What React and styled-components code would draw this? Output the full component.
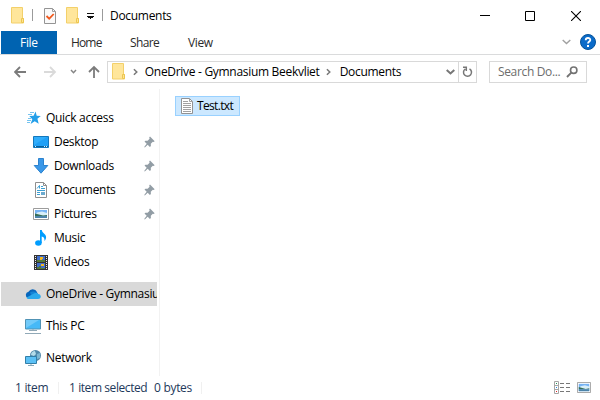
import React from "react";
import styled, { createGlobalStyle } from "styled-components";

const GlobalStyle = createGlobalStyle`
  * { box-sizing: border-box; }
  html, body { margin: 0; background: #fff; overflow: hidden; }
  svg { display: block; flex: none; }
`;

const Window = styled.div`
  width: 600px;
  height: 400px;
  display: flex;
  flex-direction: column;
  background: #fff;
  color: #000;
  font: 12px/16px "Open Sans", "Noto Sans", sans-serif;
  overflow: hidden;
`;

const Label = styled.span`
  white-space: pre;
  letter-spacing: ${(p) => p.$track ?? -0.3}px;
`;

const TitleBar = styled.header`
  height: 31px;
  flex: none;
  display: flex;
  align-items: center;
  padding-left: 11px;
`;

const QuickTools = styled.div`
  display: flex;
  align-items: center;
  flex: 1;
`;

const ToolDivider = styled.i`
  width: 1px;
  height: 12px;
  margin: 0 ${(p) => p.$after}px 2px ${(p) => p.$before}px;
  background: #9b9b9b;
`;

const ToolIcon = styled.span`
  margin-right: ${(p) => p.$gap || 0}px;
`;

const WindowButtons = styled.div`
  display: flex;
`;

const WindowButton = styled.button`
  width: ${(p) => p.$width}px;
  height: 31px;
  padding: 0;
  border: 0;
  background: none;
  display: grid;
  place-items: center;
`;

const Ribbon = styled.nav`
  height: 24px;
  flex: none;
  display: flex;
  padding-left: 1px;
  border-bottom: 1px solid #dadbdc;
`;

const FileTab = styled.div`
  width: 56px;
  padding: 4px 0 0 19px;
  background: #0063b1;
  color: #fff;
`;

const Tab = styled.div`
  width: ${(p) => p.$width}px;
  padding: 4px 0 0 14px;
  color: #2b2b2b;
`;

const RibbonEnd = styled.div`
  margin-left: auto;
  display: flex;
  align-items: center;
  gap: 9px;
  padding: 0 4px 1px 0;
`;

const NavBar = styled.div`
  height: 34px;
  flex: none;
  display: flex;
  align-items: center;
  padding: 0 13px 0 14px;
`;

const NavIcons = styled.div`
  width: 93px;
  display: flex;
  align-items: center;
`;

const AddressBox = styled.div`
  width: 370px;
  height: 22px;
  display: flex;
  align-items: center;
  border: 1px solid #d9d9d9;
  padding-left: 4px;
`;

const AddressFolder = styled.span`
  width: 21px;
  padding-bottom: 1px;
`;

const Crumb = styled.span`
  width: ${(p) => p.$width}px;
`;

const CrumbArrow = styled.span`
  width: ${(p) => p.$width}px;
`;

const Refresh = styled.div`
  width: 18px;
  height: 20px;
  margin-left: 3px;
  border-left: 1px solid #d9d9d9;
  display: grid;
  place-items: center;
`;

const SearchBox = styled.div`
  width: 98px;
  height: 22px;
  margin-left: 12px;
  padding: 0 8px;
  border: 1px solid #d9d9d9;
  color: #6d6d6d;
  display: flex;
  align-items: center;
  justify-content: space-between;
`;

const Body = styled.main`
  height: 287px;
  flex: none;
  display: flex;
`;

const Sidebar = styled.aside`
  width: 160px;
  padding: 17px 2px 0 1px;
  border-right: 1px solid #f2f2f2;
`;

const SideRow = styled.div`
  height: 24px;
  width: 156px;
  margin-top: ${(p) => p.$top || 0}px;
  padding-left: ${(p) => (p.$child ? 32 : 24)}px;
  display: flex;
  align-items: center;
  background: ${(p) => (p.$selected ? "#d9d9d9" : "transparent")};
  overflow: hidden;
`;

const SideIcon = styled.span`
  width: 21px;
  flex: none;
`;

const PinSlot = styled.span`
  margin-left: auto;
  padding-right: 2px;
`;

const Files = styled.section`
  flex: 1;
  padding: 7px 0 0 15px;
`;

const FileItem = styled.div`
  width: 65px;
  height: 20px;
  display: flex;
  align-items: center;
  gap: 4px;
  padding-left: 5px;
  background: #cce8ff;
  border: 1px solid #99d1ff;
`;

const StatusBar = styled.footer`
  flex: 1;
  display: flex;
  align-items: center;
  padding: 0 9px 1px 15px;
  color: #1e395b;
`;

const StatusText = styled.span`
  width: ${(p) => p.$width}px;
`;

const StatusDivider = styled.i`
  width: 1px;
  height: 12px;
  margin-right: ${(p) => p.$after || 0}px;
  background: #f0f0f0;
`;

const ViewModes = styled.div`
  margin-left: auto;
  display: flex;
  align-items: center;
  gap: 7px;
`;

const Folder = () => (
  <svg width="14" height="17" viewBox="0 0 14 17">
    <path d="M.5.5h11v11h1v4.5H.5z" fill="#ffe69b" stroke="#f3d06a" />
    <path d="M10.5 15.5v-4h2v4z" fill="#ffe391" stroke="#ecc650" />
  </svg>
);

const CheckedPage = () => (
  <svg width="12" height="16" viewBox="0 0 12 16">
    <path d="M.5.5h8l3 3v12H.5z" fill="#fafafa" stroke="#949494" />
    <path d="M8.5.5v3h3" fill="none" stroke="#a0a0a0" />
    <path d="M2.5 8l2.7 2.7L9.7 6" fill="none" stroke="#f0591e" strokeWidth="1.8" />
  </svg>
);

const Customize = () => (
  <svg width="7" height="6" viewBox="0 0 7 6" shapeRendering="crispEdges">
    <path d="M0 0h7v1H0zM0 3h7v1H6v1H4v1H3V5H1V4H0z" fill="#111" />
  </svg>
);

const Minimize = () => (
  <svg width="10" height="10" viewBox="0 0 10 10"><path d="M0 4.5h10" stroke="#000" /></svg>
);
const Maximize = () => (
  <svg width="10" height="10" viewBox="0 0 10 10"><path d="M.5.5h9v9h-9z" fill="none" stroke="#000" /></svg>
);
const Close = () => (
  <svg width="10" height="10" viewBox="0 0 10 10"><path d="M0 0l10 10M10 0L0 10" stroke="#000" strokeWidth="1.1" /></svg>
);

const Chevron = ({ color = "#777", w = 8, weight = 1.8 }) => (
  <svg width={w} height="6" viewBox={`0 0 ${w} 6`}>
    <path d={`M.7 1L${w / 2} ${w / 2}L${w - 0.7} 1`} fill="none" stroke={color} strokeWidth={weight} />
  </svg>
);

const RightChevron = () => (
  <svg width="5" height="8" viewBox="0 0 5 8">
    <path d="M.9 1.2L3.8 4L.9 6.8" fill="none" stroke="#777" strokeWidth="1.5" />
  </svg>
);

const Help = () => (
  <svg width="16" height="16" viewBox="0 0 16 16">
    <circle cx="8" cy="8" r="7.5" fill="#0b6bc9" stroke="#075399" />
    <path d="M5.7 6.2C5.7 3.3 10.3 3.3 10.3 6C10.3 7.6 8 7.6 8 9.6" fill="none" stroke="#fff" strokeWidth="1.8" />
    <path d="M7 11h2v2H7z" fill="#fff" />
  </svg>
);

const NavArrows = () => (
  <svg width="86" height="14" viewBox="0 0 86 14" fill="none" strokeWidth="1.8">
    <path d="M12 7H1.5M6 2L1 7L6 12" stroke="#7b7b7b" />
    <path d="M30 7h10.5M36 2l5 5l-5 5" stroke="#dadada" />
    <path d="M57 5l2.5 2.7L62 5" stroke="#858585" strokeWidth="1.5" />
    <path d="M80 13V2M75 7l5-5l5 5" stroke="#7b7b7b" />
  </svg>
);

const Reload = () => (
  <svg width="11" height="12" viewBox="0 0 11 12" fill="none" stroke="#777" strokeWidth="1.5">
    <path d="M7.5 2.8A4 4 0 1 1 3.2 3M1 1.2h3.3v3.7" />
  </svg>
);

const Magnifier = () => (
  <svg width="12" height="12" viewBox="0 0 12 12" fill="none" stroke="#737373">
    <circle cx="7.7" cy="4.2" r="3.2" strokeWidth="1.6" />
    <path d="M5.3 6.7L1 11" strokeWidth="1.9" />
  </svg>
);

const Star = () => (
  <svg width="16" height="16" viewBox="0 0 16 16">
    <path d="M10.6 1.5l1.1 4.2 4.1.2-3.4 2.8 1.3 5.1-4-2.5-4.1 2.7 1.7-4.8-3-3.1 4.3-.3z" fill="#239fe9" />
    <path d="M5 2.5h4M3 4.5h4M3 8.5h3M2 10.5h4M2 12.5h3" stroke="#75c3ef" />
  </svg>
);

const Desktop = () => (
  <svg width="16" height="16" viewBox="0 0 16 16">
    <path d="M.5 2.5h15v11H.5z" fill="#20a0f6" stroke="#1478bc" />
    <path d="M1 11V3h13z" fill="#30adfb" />
    <path d="M1 12.5h14" stroke="#075f99" />
    <path d="M2 12.5h1M11 12.5h1M13 12.5h1" stroke="#d9f1ff" />
  </svg>
);

const Download = () => (
  <svg width="16" height="16" viewBox="0 0 16 16">
    <path d="M5.5.5h5v7h4.3L8 15.2 1.2 7.5h4.3z" fill="#3b98e8" stroke="#2c83cf" />
  </svg>
);

const DocumentIcon = () => (
  <svg width="16" height="16" viewBox="0 0 16 16">
    <path d="M2.5.5h8l3 3v12h-11z" fill="#fff" stroke="#8f8f8f" />
    <path d="M10.5.5v3h3" fill="none" stroke="#8f8f8f" />
    <path d="M4 6.5l2.5-3v3M8 4.5h2M8 6.5h4M4 8.5h8M4 10.5h3M4 12.5h3" fill="none" stroke="#3d9fd2" />
    <path d="M8 10h4v3H8z" fill="#6caace" />
  </svg>
);

const PictureIcon = ({ width = 16, height = 12 }) => (
  <svg width={width} height={height} viewBox="0 0 16 12" preserveAspectRatio="none">
    <path d="M.5.5h15v11H.5z" fill="#fff" stroke="#9c9c9c" />
    <path d="M2 2h12v8H2z" fill="#76b3f4" />
    <path d="M4 4.5l5-1 5 1.5v3H2z" fill="#d8eef8" />
    <path d="M2 5.5l4 1 4 1 4-.6V8H2z" fill="#356e58" />
    <path d="M2 8h12v2H2z" fill="#4c83a9" />
  </svg>
);

const Music = () => (
  <svg width="16" height="16" viewBox="0 0 16 16">
    <ellipse cx="5.4" cy="13" rx="3.3" ry="2.7" fill="#009dfe" />
    <path d="M7 0h1.8c.2 3.1 4.3 4.1 4.3 7 0 1.7-.7 3-1.6 4 .1-3-.7-4-2.8-4.5V13H7z" fill="#009dfe" />
  </svg>
);

const Video = () => (
  <svg width="16" height="16" viewBox="0 0 16 16" shapeRendering="crispEdges">
    <path d="M1 1h14v15H1z" fill="#333" />
    <path d="M4 2h8v6H4zM4 9h8v6H4z" fill="#416fcb" />
    <path d="M4 6h3V5h2v1h3v2H4zM4 13h2v-1h2v2h4v1H4z" fill="#537838" />
    <path d="M7 3h3v2H9v1H7zM8 10h3v2H8z" fill="#f2b820" />
    <path d="M2.5 2v13M13.5 2v13" stroke="#eee" strokeDasharray="1 1" />
  </svg>
);

const Cloud = () => (
  <svg width="16" height="16" viewBox="0 0 16 16">
    <path d="M3 12a3.2 3.2 0 0 1 .5-6.2A4.7 4.7 0 0 1 12 6l1 5z" fill="#0866bc" />
    <path d="M5 6.4c3-2.2 8-.4 8 2l-5 4z" fill="#1483d4" />
    <path d="M1.5 11.4L8 8c2-1.4 4.5-1 5.1 0 3.5.2 3.7 5-.1 5H4c-1.3 0-2.1-.7-2.5-1.6z" fill="#2aa8ec" />
  </svg>
);

const Computer = () => (
  <svg width="16" height="16" viewBox="0 0 16 16">
    <path d="M.5 1.5h15v9.5H.5z" fill="#46b9f7" stroke="#5193b5" />
    <path d="M1 2h13L1 10z" fill="#72caf9" />
    <path d="M8 11v2M4 12.5h8M0 15.5h16" stroke="#91a9b7" />
  </svg>
);

const Network = () => (
  <svg width="16" height="16" viewBox="0 0 16 16">
    <circle cx="10.5" cy="5.5" r="5.5" fill="#5189aa" />
    <path d="M6 5c.2-3 2-4 4-4l1 3-2 2z" fill="#b4dce9" />
    <path d="M12 4l3-1v5l-3 1z" fill="#7db6d1" />
    <path d="M.5 6.5h11v7H.5z" fill="#5bc0f5" stroke="#327fa8" />
    <path d="M6 14v2M3 15.5h6" stroke="#88a9b9" />
  </svg>
);

const Pin = () => (
  <svg width="11" height="12" viewBox="0 0 11 12">
    <path d="M6 .5l4.7 4.7-1.1.8-.8-.2-2 2 .1 2.2-1 .9L3.7 8.7.8 11.4.2 11l2.5-3.3L.5 5.5l.9-.8 2.2.1 2-2L5.2 1.5z" fill="#929da5" />
  </svg>
);

const TextFile = () => (
  <svg width="12" height="16" viewBox="0 0 12 16">
    <path d="M.5.5h8l3 3v12H.5z" fill="#fff" stroke="#929292" />
    <path d="M8.5.5v3h3M2 3.5h5M2 5.5h8M2 7.5h8M2 9.5h8M2 11.5h8M2 13.5h8" fill="none" stroke="#a1a1a1" />
  </svg>
);

const Details = () => (
  <svg width="16" height="13" viewBox="0 0 16 13">
    <path d="M.5.5h4v12h-4zM0 4.5h4.5M0 8.5h4.5" fill="#fff" stroke="#a6a6a6" />
    <path d="M2 2h1v1H2z" fill="#20935a" />
    <path d="M2 6h1v1H2z" fill="#2488e8" />
    <path d="M2 10h1v1H2z" fill="#e02323" />
    <path d="M6 2.5h4M12 2.5h4M6 6.5h4M12 6.5h4M6 10.5h4M12 10.5h4" stroke="#777" />
  </svg>
);

const places = [
  { name: "Quick access", icon: <Star /> },
  { name: "Desktop", icon: <Desktop />, child: true, pinned: true },
  { name: "Downloads", icon: <Download />, child: true, pinned: true },
  { name: "Documents", icon: <DocumentIcon />, child: true, pinned: true },
  { name: "Pictures", icon: <PictureIcon />, child: true, pinned: true },
  { name: "Music", icon: <Music />, child: true },
  { name: "Videos", icon: <Video />, child: true },
  { name: "OneDrive - Gymnasium Beekvliet", icon: <Cloud />, top: 8, selected: true },
  { name: "This PC", icon: <Computer />, top: 8 },
  { name: "Network", icon: <Network />, top: 8 },
];

export default function App() {
  return (
    <>
      <GlobalStyle />
      <Window>
        <TitleBar>
          <QuickTools>
            <ToolIcon><Folder /></ToolIcon>
            <ToolDivider $before={7} $after={11} />
            <ToolIcon $gap={10}><CheckedPage /></ToolIcon>
            <ToolIcon $gap={7}><Folder /></ToolIcon>
            <ToolIcon><Customize /></ToolIcon>
            <ToolDivider $before={8} $after={7} />
            <Label>Documents</Label>
          </QuickTools>
          <WindowButtons>
            <WindowButton $width={46} aria-label="Minimize"><Minimize /></WindowButton>
            <WindowButton $width={44} aria-label="Maximize"><Maximize /></WindowButton>
            <WindowButton $width={48} aria-label="Close"><Close /></WindowButton>
          </WindowButtons>
        </TitleBar>
        <Ribbon>
          <FileTab><Label>File</Label></FileTab>
          <Tab $width={59}><Label $track={-0.85}>Home</Label></Tab>
          <Tab $width={58}><Label $track={-0.6}>Share</Label></Tab>
          <Tab $width={60}><Label $track={-0.4}>View</Label></Tab>
          <RibbonEnd><Chevron color="#a0a0a0" w={9} weight={1.4} /><Help /></RibbonEnd>
        </Ribbon>
        <NavBar>
          <NavIcons><NavArrows /></NavIcons>
          <AddressBox>
            <AddressFolder><Folder /></AddressFolder>
            <CrumbArrow $width={12}><RightChevron /></CrumbArrow>
            <Crumb $width={182}><Label>OneDrive - Gymnasium Beekvliet</Label></Crumb>
            <CrumbArrow $width={14}><RightChevron /></CrumbArrow>
            <Crumb $width={107}><Label>Documents</Label></Crumb>
            <Chevron w={9} weight={2} />
            <Refresh><Reload /></Refresh>
          </AddressBox>
          <SearchBox><Label $track={-0.35}>Search Do...</Label><Magnifier /></SearchBox>
        </NavBar>
        <Body>
          <Sidebar>
            {places.map((p) => (
              <SideRow key={p.name} $child={p.child} $top={p.top} $selected={p.selected}>
                <SideIcon>{p.icon}</SideIcon>
                <Label>{p.name}</Label>
                {p.pinned && <PinSlot><Pin /></PinSlot>}
              </SideRow>
            ))}
          </Sidebar>
          <Files>
            <FileItem><TextFile /><Label $track={-0.65}>Test.txt</Label></FileItem>
          </Files>
        </Body>
        <StatusBar>
          <StatusText $width={43}><Label>1 item</Label></StatusText>
          <StatusDivider $after={10} />
          <StatusText $width={85}><Label $track={-0.42}>1 item selected</Label></StatusText>
          <StatusText $width={47}><Label>0 bytes</Label></StatusText>
          <StatusDivider />
          <ViewModes><Details /><PictureIcon width={14} height={11} /></ViewModes>
        </StatusBar>
      </Window>
    </>
  );
}
